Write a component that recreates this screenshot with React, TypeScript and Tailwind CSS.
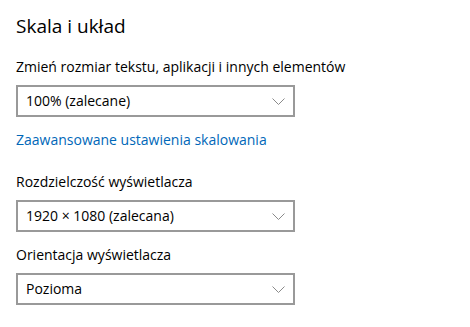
import React from "react";

const Chevron: React.FC = () => (
  <svg width="13" height="7" viewBox="0 0 13 7" className="shrink-0">
    <path d="M0.5 0.5 L6.5 6.5 L12.5 0.5" fill="none" stroke="#8a8a8a" strokeWidth="1" />
  </svg>
);

const Select: React.FC<{ value: string }> = ({ value }) => (
  <div className="flex items-center justify-between w-[279px] h-[32px] border-2 border-[#999999] pl-[8px] pr-[8px]">
    <span className="text-[14px] text-black leading-none">{value}</span>
    <Chevron />
  </div>
);

const App: React.FC = () => {
  return (
    <div className="w-[470px] h-[327px] bg-white px-4 pt-[12px] font-['Open_Sans',sans-serif] text-black">
      <h2 className="text-[19px] leading-[28px]">Skala i układ</h2>

      <div className="mt-[17px] text-[14px] leading-[20px]">
        Zmień rozmiar tekstu, aplikacji i innych elementów
      </div>
      <div className="mt-[8px]">
        <Select value="100% (zalecane)" />
      </div>

      <div className="mt-[13px] text-[14px] leading-[20px] text-[#0067b8]">
        Zaawansowane ustawienia skalowania
      </div>

      <div className="mt-[22px] text-[14px] leading-[20px]">Rozdzielczość wyświetlacza</div>
      <div className="mt-[8px]">
        <Select value="1920 × 1080 (zalecana)" />
      </div>

      <div className="mt-[13px] text-[14px] leading-[20px]">Orientacja wyświetlacza</div>
      <div className="mt-[8px]">
        <Select value="Pozioma" />
      </div>
    </div>
  );
};

export default App;
